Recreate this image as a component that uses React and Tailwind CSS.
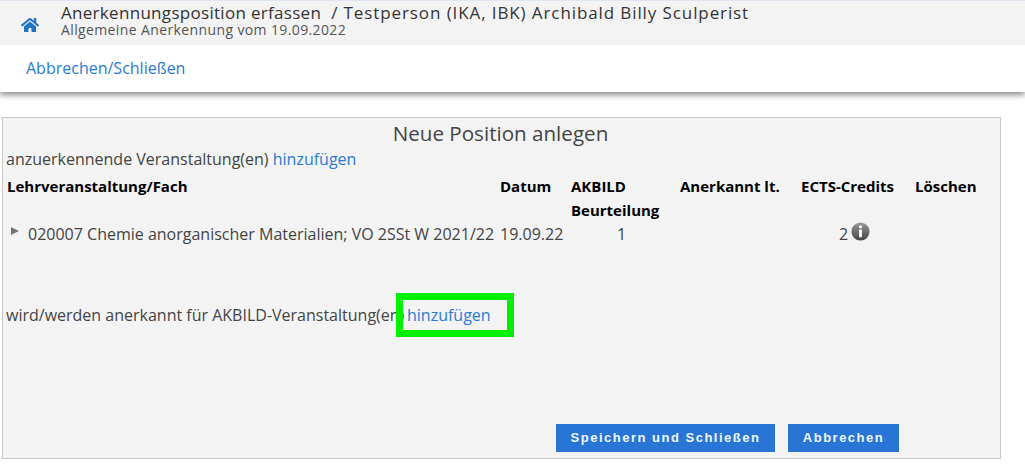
import { FaHome } from "react-icons/fa";

const linkColor = "text-[#2a7bd4]";

function Header() {
  return (
    <div className="h-[92px] bg-white shadow-[0_3px_6px_rgba(0,0,0,0.45)]">
      <div className="flex h-[45px] bg-[#f3f3f4] border-t border-[#dfe6f2]">
        <div className="flex w-[60px] justify-center pt-[15px]">
          <FaHome className="h-[18px] w-[18px] text-[#1f74c8]" />
        </div>
        <div className="text-[#333]">
          <div className="flex gap-[10px] whitespace-nowrap pl-px pt-[3px] text-[17px] leading-[18px] font-medium">
            <span className="tracking-[0.3px]">Anerkennungsposition erfassen</span>
            <span className="tracking-[0.9px]">/ Testperson (IKA, IBK) Archibald Billy Sculperist</span>
          </div>
          <div className="pl-px text-[14px] leading-[15px] tracking-[0.38px] text-[#555]">
            Allgemeine Anerkennung vom 19.09.2022
          </div>
        </div>
      </div>
      <div className="pl-[26px] pt-[11px]">
        <a className={`text-[16px] leading-6 ${linkColor}`}>Abbrechen/Schließen</a>
      </div>
    </div>
  );
}

function CourseTable() {
  return (
    <div className="grid grid-cols-[493px_71px_109px_121px_114px_80px] pl-[4px] text-[16px] leading-[24px] text-[#444]">
      <div className="text-[15px] font-bold text-black">Lehrveranstaltung/Fach</div>
      <div className="text-[15px] font-bold text-black">Datum</div>
      <div className="text-[15px] font-bold text-black">AKBILD<br />Beurteilung</div>
      <div className="text-[15px] font-bold text-black">Anerkannt lt.</div>
      <div className="text-[15px] font-bold text-black">ECTS-Credits</div>
      <div className="text-[15px] font-bold text-black">Löschen</div>

      <div className="flex items-center whitespace-nowrap">
        <span className="mb-[7px] ml-[4px] mr-[9px] h-0 w-0 border-y-[4px] border-l-[8px] border-y-transparent border-l-[#777]" />
        020007 Chemie anorganischer Materialien; VO 2SSt W 2021/22
      </div>
      <div>19.09.22</div>
      <div className="pl-[46px]">1</div>
      <div />
      <div className="flex items-start pl-[38px]">
        2
        <svg viewBox="0 0 20 20" className="ml-[3px] h-[19px] w-[19px]">
          <defs>
            <linearGradient id="infoFill" x1="0" y1="0" x2="0" y2="1">
              <stop offset="0" stopColor="#999" />
              <stop offset="1" stopColor="#444" />
            </linearGradient>
          </defs>
          <circle cx="10" cy="10" r="9.5" fill="url(#infoFill)" />
          <circle cx="10" cy="5" r="1.7" fill="#fff" />
          <rect x="8.5" y="8" width="3" height="8" fill="#fff" />
        </svg>
      </div>
      <div />
    </div>
  );
}

export default function App() {
  return (
    <div className="h-[472px] w-[1025px] overflow-hidden bg-white font-['Open_Sans',sans-serif]">
      <Header />
      <div className="ml-[2px] mt-[25px] h-[342px] w-[999px] border border-[#c9c9c9] bg-[#f3f3f3]">
        <h1 className="pr-[2px] pt-[1px] text-center text-[20.6px] leading-[28px] text-[#444]">Neue Position anlegen</h1>
        <div className="pl-[3px] text-[16px] leading-[24px] text-[#444]">
          anzuerkennende Veranstaltung(en) <a className={linkColor}>hinzufügen</a>
        </div>
        <div className="mt-[3px]">
          <CourseTable />
        </div>
        <div className="relative mt-[57px] pl-[3px] text-[16px] leading-[24px] text-[#444]">
          <span className="inline-block w-[401px] whitespace-nowrap">wird/werden anerkannt für AKBILD-Veranstaltung(en)</span>
          <a className={linkColor}>hinzufügen</a>
          <div className="absolute left-[393px] top-[-10px] h-[44px] w-[118px] border-[7px] border-[#00f000]" />
        </div>
        <div className="mt-[97px] flex gap-[13px] pl-[553px]">
          <button className="h-[28px] w-[219px] bg-[#2875d6] font-['Liberation_Sans',sans-serif] text-[13px] font-bold tracking-[1.5px] text-[#eef5fd]">
            Speichern und Schließen
          </button>
          <button className="h-[28px] w-[111px] bg-[#2875d6] font-['Liberation_Sans',sans-serif] text-[13px] font-bold tracking-[1.5px] text-[#eef5fd]">
            Abbrechen
          </button>
        </div>
      </div>
    </div>
  );
}
